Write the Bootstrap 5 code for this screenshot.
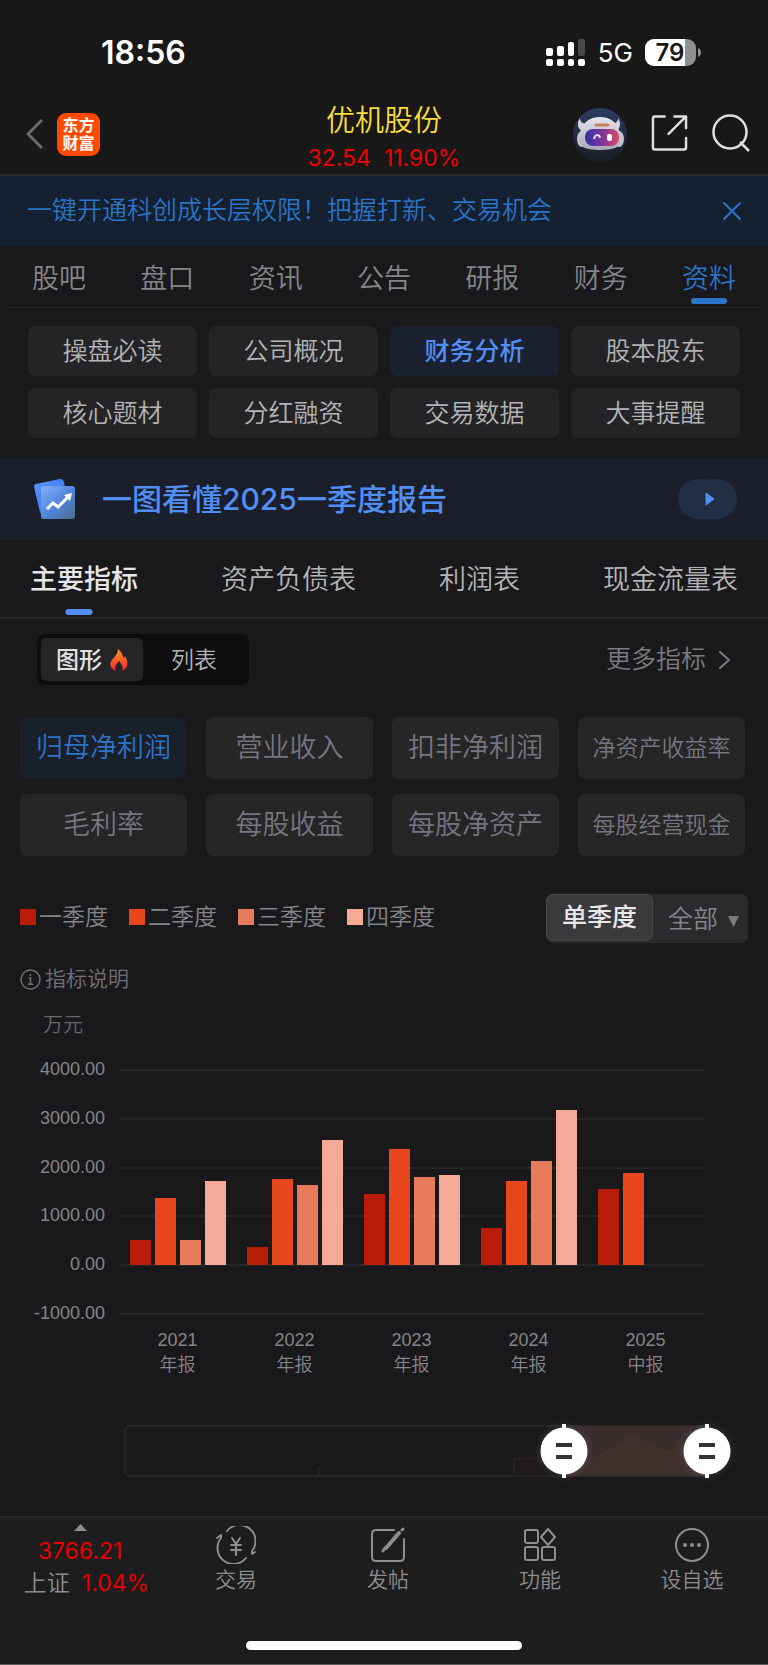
<!DOCTYPE html>
<html lang="zh-CN" data-bs-theme="dark">
<head>
<meta charset="utf-8">
<meta name="viewport" content="width=device-width, initial-scale=1">
<title>优机股份 财务分析</title>
<link href="https://cdn.jsdelivr.net/npm/bootstrap@5.3.0/dist/css/bootstrap.min.css" rel="stylesheet">
<style>
  :root { --page: #19191b; --blue: #2c74c8; --bright: #528ff5; --line: #262629; }
  body { background: var(--page); color: #b4b4b6; font-family: Inter, "Noto Sans CJK SC", sans-serif; font-weight: 350; min-height: 100vh; }
  a { color: inherit; text-decoration: none; }
  button { font: inherit; color: inherit; border: 0; background: none; padding: 0; }
  svg { display: block; flex: none; }
  .icon-line { fill: none; stroke: currentColor; stroke-width: 2; stroke-linecap: round; stroke-linejoin: round; }

  .status-bar { height: 99px; padding: 6px 66px 0 101px; background: #181818; color: #fff; }
  .clock { font-size: 32px; font-weight: 600; line-height: 40px; }
  .network { font-size: 26px; font-weight: 400; line-height: 32px; }

  .stock-head { height: 77px; background: #181818; border-bottom: 2px solid #2a2a2b; display: grid; grid-template-columns: 1fr auto 1fr; }
  .head-left { padding: 14px 0 0 26px; gap: 14px; }
  .head-right { padding: 7px 18px 0 0; gap: 24px; }
  .brand { width: 43px; height: 43px; border-radius: 9px; background: #ff4a03; color: #fff; font-size: 16px; font-weight: 700; line-height: 18px; text-align: center; padding-top: 3px; }
  .stock-name { color: #fbdc3c; font-size: 29px; font-weight: 350; line-height: 44px; margin: 0; }
  .quote { color: #ec0202; font-size: 23px; line-height: 30px; font-weight: 400; gap: 13px; }

  .notice { height: 70px; background: #152030; color: var(--blue); font-size: 25px; padding: 0 26px 0 27px; }

  .main-tabs { height: 62px; padding: 0 26px; margin: 0 6px; border-bottom: 1px solid var(--line); font-size: 27px; color: #86868a; }
  .main-tabs a { position: relative; line-height: 65px; height: 61px; }
  .main-tabs .current { color: var(--blue); }
  .current::after { content: ""; position: absolute; left: 50%; transform: translateX(-50%); border-radius: 3px; height: 6px; }
  .main-tabs .current::after { bottom: 3px; width: 36px; background: var(--blue); }

  .four { display: grid; grid-template-columns: repeat(4, 1fr); }
  .sub-nav { padding: 18px 28px 20px; gap: 12px; font-size: 25px; }
  .sub-nav a { height: 50px; line-height: 51px; border-radius: 7px; background: #242426; text-align: center; }
  .sub-nav .chosen { background: #1b2130; color: var(--bright); font-weight: 500; }

  .promo { height: 82px; background: #1b1f2b; color: var(--bright); font-size: 30px; font-weight: 500; padding: 0 31px 0 32px; gap: 26px; line-height: 44px; }
  .play { width: 59px; height: 40px; border-radius: 20px; background: #222e44; color: var(--bright); }

  .report-tabs { height: 79px; padding: 0 30px; border-bottom: 2px solid var(--line); font-size: 27px; }
  .report-tabs a { position: relative; height: 77px; line-height: 79px; }
  .report-tabs .current { color: #e6e6e8; font-weight: 500; }
  .report-tabs .current::after { left: 45%; bottom: 2px; width: 27px; background: var(--bright); }

  .view-row { padding: 15px 32px 0 37px; }
  .segment { background: #0d0d0d; border-radius: 7px; padding: 4px; font-size: 23px; }
  .segment button { width: 102px; height: 43px; line-height: 40px; border-radius: 5px; }
  .segment .on { background: #252527; color: #e2e2e4; font-weight: 500; }
  .more { font-size: 25px; color: #7c7c80; gap: 10px; }

  .metrics { padding: 32px 23px 0 20px; column-gap: 19px; row-gap: 15px; font-size: 27px; color: #777582; }
  .metrics button { height: 62px; line-height: 58px; border-radius: 7px; background: #262626; white-space: nowrap; }
  .metrics .on { background: #1a202a; color: var(--blue); }
  .metrics .long { font-size: 23px; }

  .legend-row { padding: 38px 20px 0; color: #85858a; }
  .legend-list { gap: 21px; padding-top: 7px; }
  .legend-item { font-size: 23px; line-height: 32px; gap: 3px; }
  .swatch { width: 16px; height: 16px; }
  .q1 { background: #b81b07; } .q2 { background: #e8461d; } .q3 { background: #e87b5b; } .q4 { background: #f5aa97; }
  .period { height: 49px; background: #2b2b2d; border-radius: 7px; font-size: 25px; }
  .period button { width: 107px; height: 47px; line-height: 45px; background: #3a3a3c; border: 1px solid #48484a; border-radius: 7px; color: #e8e8ea; font-weight: 500; }
  .period select { width: 95px; border: 0; appearance: none; font: inherit; color: #85858a; padding: 2px 0 0 15px;
    background: url("data:image/svg+xml,%3Csvg xmlns='http://www.w3.org/2000/svg' width='11' height='11'%3E%3Cpath d='M0 0h11L5.500 11z' fill='%237c7c7e'/%3E%3C/svg%3E") no-repeat 75px 22px; }

  .explain { padding: 20px 20px 0; font-size: 21px; line-height: 32px; color: #707073; }
  .unit { padding: 16px 43px 0; font-size: 20px; line-height: 28px; color: #68686b; }

  .chart { margin: 30px 64px 0 0; display: grid; grid-template-columns: 105px 1fr; column-gap: 14px; font-family: "Liberation Sans", "Noto Sans CJK SC", sans-serif; color: #85858a; font-size: 18px; }
  .y-axis { margin: -12px 0 -10px; line-height: 24px; text-align: right; }
  .plot { position: relative; height: 246px; }
  .rule { height: 2px; background: var(--line); }
  .bars { position: absolute; inset: 0 0 50px; display: grid; grid-template-columns: repeat(5, 1fr); }
  .year { display: grid; grid-template-columns: repeat(4, 21px); justify-content: center; column-gap: 4px; align-items: end; }
  .x-axis { grid-column: 2; display: grid; grid-template-columns: repeat(5, 1fr); text-align: center; line-height: 25px; padding-top: 13px; }

  .zoom-range { position: relative; margin: 46px 61px 0 124px; height: 54px; }
  .zoom-range > svg { width: 100%; height: 54px; }
  .zoom-range input { position: absolute; top: 0; left: -24px; width: calc(100% + 48px); height: 54px; margin: 0; appearance: none; background: none; pointer-events: none; }
  .zoom-range input::-webkit-slider-thumb { appearance: none; width: 48px; height: 54px; border: 0; pointer-events: auto; filter: drop-shadow(0 0 4px rgba(255,255,255,.15));
    background: url("data:image/svg+xml,%3Csvg xmlns='http://www.w3.org/2000/svg' width='48' height='54'%3E%3Cpath d='M24 0v54' stroke='%23fff' stroke-width='4'/%3E%3Ccircle cx='24' cy='27' r='23.500' fill='%23fff'/%3E%3Cpath d='M16 21h16M16 33h16' stroke='%23333' stroke-width='4'/%3E%3C/svg%3E") no-repeat center; }

  .bottom-bar { background: #1d1d1d; border-top: 2px solid #262626; height: 149px; border-bottom: 1px solid #5c5c5c; color: #8e8e92; font-size: 21px; }
  .bottom-bar a { text-align: center; line-height: 32px; }
  .index { width: 160px; font-size: 23px; padding-top: 6px; }
  .index-change { gap: 12px; padding-left: 13px; }
  .up { color: #e60000; font-size: 23px; font-weight: 400; }
  .bottom-bar .action { flex: 1 1 0; padding-top: 8px; }
  .home-mark { width: 276px; height: 9px; border-radius: 5px; background: #fff; margin: 0 auto 14px; }
</style>
</head>
<body class="d-flex flex-column">

<div class="status-bar d-flex align-items-center justify-content-between">
  <div class="clock">18:56</div>
  <div class="d-flex align-items-center">
    <svg width="40" height="28" viewBox="0 0 40 28" fill="#fff">
      <rect x="0" y="9" width="7" height="8" rx="2"/><rect x="11" y="7" width="7" height="10" rx="2"/><rect x="22" y="3" width="6" height="14" rx="2"/><rect x="32" y="0" width="7" height="17" rx="2" fill="#48484a"/>
      <rect x="0" y="20" width="7" height="7" rx="2"/><rect x="11" y="20" width="7" height="7" rx="2"/><rect x="22" y="20" width="6" height="7" rx="2"/><rect x="32" y="20" width="7" height="7" rx="2"/>
    </svg>
    <span class="network ms-2 ps-1 me-2 pe-1">5G</span>
    <svg width="57" height="28" viewBox="0 0 57 28">
      <defs><clipPath id="cell"><rect width="51" height="27" rx="9"/></clipPath></defs>
      <g clip-path="url(#cell)"><rect width="51" height="27" fill="#8f8f91"/><rect width="40" height="27" fill="#fff"/></g>
      <path d="M53 9c4 1 4 8 0 9z" fill="#8f8f91"/>
      <text x="25" y="22" text-anchor="middle" font-family="Inter, sans-serif" font-size="24" font-weight="600" fill="#181818">79</text>
    </svg>
  </div>
</div>

<header class="stock-head">
  <div class="head-left d-flex align-items-start">
    <a href="#" aria-label="返回"><svg class="mt-1" width="17" height="34" viewBox="0 0 17 34"><path d="M16 3 2 17l14 14" fill="none" stroke="#6c6c6c" stroke-width="3"/></svg></a>
    <a href="#" class="brand">东方<br>财富</a>
  </div>
  <div class="text-center">
    <h1 class="stock-name">优机股份</h1>
    <div class="quote d-flex justify-content-center"><span>32.54</span><span>11.90%</span></div>
  </div>
  <div class="head-right d-flex justify-content-end align-items-start">
    <a href="#" aria-label="智能助手"><svg width="54" height="56" viewBox="0 0 54 56">
      <defs>
        <linearGradient id="sky" x2="0" y2="1"><stop stop-color="#2c3c60"/><stop offset="1" stop-color="#1b1d25"/></linearGradient>
        <linearGradient id="visor"><stop stop-color="#3532a8"/><stop offset=".55" stop-color="#84369a"/><stop offset="1" stop-color="#dd4a62"/></linearGradient>
        <linearGradient id="shell" x2="0" y2="1"><stop stop-color="#e5e3ec"/><stop offset="1" stop-color="#aaa8b8"/></linearGradient>
      </defs>
      <circle cx="27" cy="29" r="27" fill="url(#sky)"/>
      <path d="M7 12c-4 6-2 12 4 14l6-8c-6 0-10-1-10-6zm38 0c4 6 2 12-4 14l-6-8c6 0 10-1 10-6z" fill="#d6d4de"/>
      <ellipse cx="9" cy="33" rx="5" ry="8" fill="#c5c3d0"/><ellipse cx="46" cy="33" rx="5" ry="8" fill="#c5c3d0"/>
      <path d="M27 11c9 0 16 4 19 13 3 8 2 14-2 17-6 4-28 4-34 0-4-3-5-9-2-17 3-9 10-13 19-13z" fill="url(#shell)"/>
      <rect x="12" y="23" width="34" height="17" rx="8" fill="url(#visor)"/>
      <path d="M21 33c1-5 5-5 6-1" fill="none" stroke="#e8defa" stroke-width="2"/><rect x="34" y="28" width="5" height="7" rx="2" fill="#fff"/>
      <path d="M23 19h12" stroke="#c4825a" stroke-width="3" stroke-linecap="round"/>
    </svg></a>
    <a href="#" aria-label="分享"><svg class="mt-2" width="37" height="38" viewBox="0 0 38 38" fill="none" stroke="#dedede" stroke-width="2.500" stroke-linecap="round" stroke-linejoin="round"><path d="M14 2H4Q2 2 2 4v30q0 2 2 2h30q2 0 2-2V24M36 14V2H24M36 2 18 20"/></svg></a>
    <a href="#" aria-label="搜索"><svg class="mt-2" width="38" height="38" viewBox="0 0 38 38" fill="none" stroke="#dedede" stroke-width="2.500"><circle cx="18" cy="18" r="16.500"/><path d="m28 28 9 9"/></svg></a>
  </div>
</header>

<div class="notice d-flex align-items-center justify-content-between">
  <a href="#">一键开通科创成长层权限！把握打新、交易机会</a>
  <button aria-label="关闭"><svg width="20" height="20" viewBox="0 0 20 20" class="icon-line"><path d="m2 2 16 16M18 2 2 18"/></svg></button>
</div>

<nav class="main-tabs d-flex justify-content-between">
  <a href="#">股吧</a><a href="#">盘口</a><a href="#">资讯</a><a href="#">公告</a><a href="#">研报</a><a href="#">财务</a><a href="#" class="current">资料</a>
</nav>

<nav class="sub-nav four">
  <a href="#">操盘必读</a><a href="#">公司概况</a><a href="#" class="chosen">财务分析</a><a href="#">股本股东</a>
  <a href="#">核心题材</a><a href="#">分红融资</a><a href="#">交易数据</a><a href="#">大事提醒</a>
</nav>

<a href="#" class="promo d-flex align-items-center">
  <svg width="44" height="44" viewBox="0 0 44 44">
    <defs>
      <linearGradient id="sheet" x2="1" y2="1"><stop stop-color="#5c97fb"/><stop offset="1" stop-color="#2b67f4"/></linearGradient>
      <linearGradient id="glass" x2="1" y2="1"><stop stop-color="#86b0fb"/><stop offset=".55" stop-color="#4e83d8"/><stop offset="1" stop-color="#4e6f8c"/></linearGradient>
    </defs>
    <path d="M4 7 28 2q3 0 4 3l5 29-25 4q-3 0-4-3L2 10q0-3 2-3z" fill="url(#sheet)"/>
    <rect x="9" y="9" width="34" height="33" rx="3" fill="url(#glass)"/>
    <path d="m15 32 6-6 5 4 10-10" fill="none" stroke="#fff" stroke-width="3"/><path d="m32 18 8-2-2 8z" fill="#fff"/>
  </svg>
  <span class="me-auto">一图看懂2025一季度报告</span>
  <span class="play d-flex align-items-center justify-content-center"><svg class="ms-1" width="10" height="14" viewBox="0 0 10 14"><path d="m1 1 8 6-8 6z" fill="currentColor" stroke="currentColor" stroke-linejoin="round"/></svg></span>
</a>

<nav class="report-tabs d-flex justify-content-between">
  <a href="#" class="current">主要指标</a><a href="#">资产负债表</a><a href="#">利润表</a><a href="#">现金流量表</a>
</nav>

<div class="view-row d-flex align-items-center justify-content-between">
  <div class="segment d-flex">
    <button class="on d-flex align-items-center justify-content-center gap-2">图形<svg width="18" height="22" viewBox="0 0 18 22"><defs><linearGradient id="fire" x2="0" y2="1"><stop stop-color="#ff9a1c"/><stop offset="1" stop-color="#f0252c"/></linearGradient></defs><path d="M8 0c5 4 4 7 6 9l1-2c4 7 3 12-3 15 2-5-1-7-3-10-3 3-5 6-3 10-6-2-7-7-4-11 2-3 6-6 6-11z" fill="url(#fire)"/></svg></button>
    <button>列表</button>
  </div>
  <a href="#" class="more d-flex align-items-center">更多指标<svg width="20" height="18" viewBox="0 0 20 18"><path class="icon-line" d="m4 1 9 8-9 8"/></svg></a>
</div>

<div class="metrics four">
  <button class="on">归母净利润</button><button>营业收入</button><button>扣非净利润</button><button class="long">净资产收益率</button>
  <button>毛利率</button><button>每股收益</button><button>每股净资产</button><button class="long">每股经营现金</button>
</div>

<div class="legend-row d-flex align-items-start justify-content-between">
  <div class="legend-list d-flex">
    <span class="legend-item d-flex align-items-center"><i class="swatch q1"></i>一季度</span>
    <span class="legend-item d-flex align-items-center"><i class="swatch q2"></i>二季度</span>
    <span class="legend-item d-flex align-items-center"><i class="swatch q3"></i>三季度</span>
    <span class="legend-item d-flex align-items-center"><i class="swatch q4"></i>四季度</span>
  </div>
  <div class="period d-flex">
    <button>单季度</button>
    <select aria-label="报告期"><option>全部</option></select>
  </div>
</div>

<a href="#" class="explain d-flex align-items-center gap-1">
  <svg width="21" height="21" viewBox="0 0 21 21" fill="none" stroke="currentColor" stroke-width="1.500"><circle cx="10.500" cy="10.500" r="9.500"/><path d="M8.500 9h2v6M8 15.200h5"/><circle cx="10.300" cy="6" r="1" fill="currentColor" stroke="none"/></svg>
  指标说明
</a>
<div class="unit">万元</div>

<section class="chart" aria-label="归母净利润">
  <div class="y-axis d-flex flex-column justify-content-between">
    <span>4000.00</span><span>3000.00</span><span>2000.00</span><span>1000.00</span><span>0.00</span><span>-1000.00</span>
  </div>
  <div class="plot d-flex flex-column justify-content-between">
    <div class="rule"></div><div class="rule"></div><div class="rule"></div><div class="rule"></div><div class="rule"></div><div class="rule"></div>
    <div class="bars">
      <div class="year"><i class="q1" style="height:13%"></i><i class="q2" style="height:34%"></i><i class="q3" style="height:13%"></i><i class="q4" style="height:43%"></i></div>
      <div class="year"><i class="q1" style="height:9%"></i><i class="q2" style="height:44%"></i><i class="q3" style="height:41%"></i><i class="q4" style="height:64%"></i></div>
      <div class="year"><i class="q1" style="height:36%"></i><i class="q2" style="height:59%"></i><i class="q3" style="height:45%"></i><i class="q4" style="height:46%"></i></div>
      <div class="year"><i class="q1" style="height:19%"></i><i class="q2" style="height:43%"></i><i class="q3" style="height:53%"></i><i class="q4" style="height:79%"></i></div>
      <div class="year"><i class="q1" style="height:39%"></i><i class="q2" style="height:47%"></i></div>
    </div>
  </div>
  <div class="x-axis">
    <div>2021<br>年报</div><div>2022<br>年报</div><div>2023<br>年报</div><div>2024<br>年报</div><div>2025<br>中报</div>
  </div>
</section>

<div class="zoom-range">
  <svg viewBox="0 0 583 54" preserveAspectRatio="none">
    <path d="M582 2H6Q1 2 1 7v40q0 5 5 5h576" fill="none" stroke="#252528" stroke-width="2"/>
    <path d="M195 42v9" stroke="#382a29"/>
    <path d="M390 52V35l50-3v20z" fill="#1e1a1c" stroke="#2b2525"/>
    <path d="M440 2h143v50H440z" fill="#392d2e"/>
    <path d="M440 52V32l26 6 41-25 39 15 37-16v40z" fill="#3f302e"/><path d="m440 32 26 6 41-25 39 15 37-16" fill="none" stroke="#49342f"/>
  </svg>
  <input type="range" aria-label="起始报告期" min="0" max="1000" value="755">
  <input type="range" aria-label="结束报告期" min="0" max="1000" value="1000">
</div>

<footer class="bottom-bar mt-auto d-flex flex-column">
  <nav class="d-flex">
    <a href="#" class="index d-flex flex-column align-items-center">
      <svg class="mb-1" width="13" height="7" viewBox="0 0 13 7"><path d="M0 7 6.500 0 13 7z" fill="#8e8e92"/></svg>
      <span class="up">3766.21</span>
      <span class="index-change d-flex"><span>上证</span><span class="up">1.04%</span></span>
    </a>
    <a href="#" class="action d-flex flex-column align-items-center"><svg class="icon-line" width="40" height="38" viewBox="0 0 40 38"><path d="M11 5a16 16 0 0 1 25 20v3l3-2M30 32A16 16 0 0 1 5 12V9l-4 3M16 12l4 6 4-6M20 18v11M15 19h10M15 24h10"/></svg>交易</a>
    <a href="#" class="action d-flex flex-column align-items-center"><svg class="icon-line" width="36" height="38" viewBox="0 0 36 38"><path d="M24 4H6Q2 4 2 8v23q0 4 4 4h24q4 0 4-4V13"/><path d="m16 22 13-15" stroke-width="4"/><path d="M13 25l2-3M32 4l1-1" stroke-width="3"/></svg>发帖</a>
    <a href="#" class="action d-flex flex-column align-items-center"><svg class="icon-line" width="32" height="38" viewBox="0 0 32 38"><rect x="1" y="4" width="13" height="13" rx="2"/><rect x="1" y="21" width="13" height="13" rx="2"/><rect x="18" y="21" width="13" height="13" rx="2"/><path d="m24 3 7 8-7 8-7-8z"/></svg>功能</a>
    <a href="#" class="action d-flex flex-column align-items-center"><svg class="icon-line" width="36" height="38" viewBox="0 0 36 38"><circle cx="18" cy="19" r="16"/><path d="M11 19h0M18 19h0M25 19h0" stroke-width="4"/></svg>设自选</a>
  </nav>
  <div class="home-mark mt-auto"></div>
</footer>

<script src="https://cdn.jsdelivr.net/npm/bootstrap@5.3.0/dist/js/bootstrap.bundle.min.js"></script>
</body>
</html>
